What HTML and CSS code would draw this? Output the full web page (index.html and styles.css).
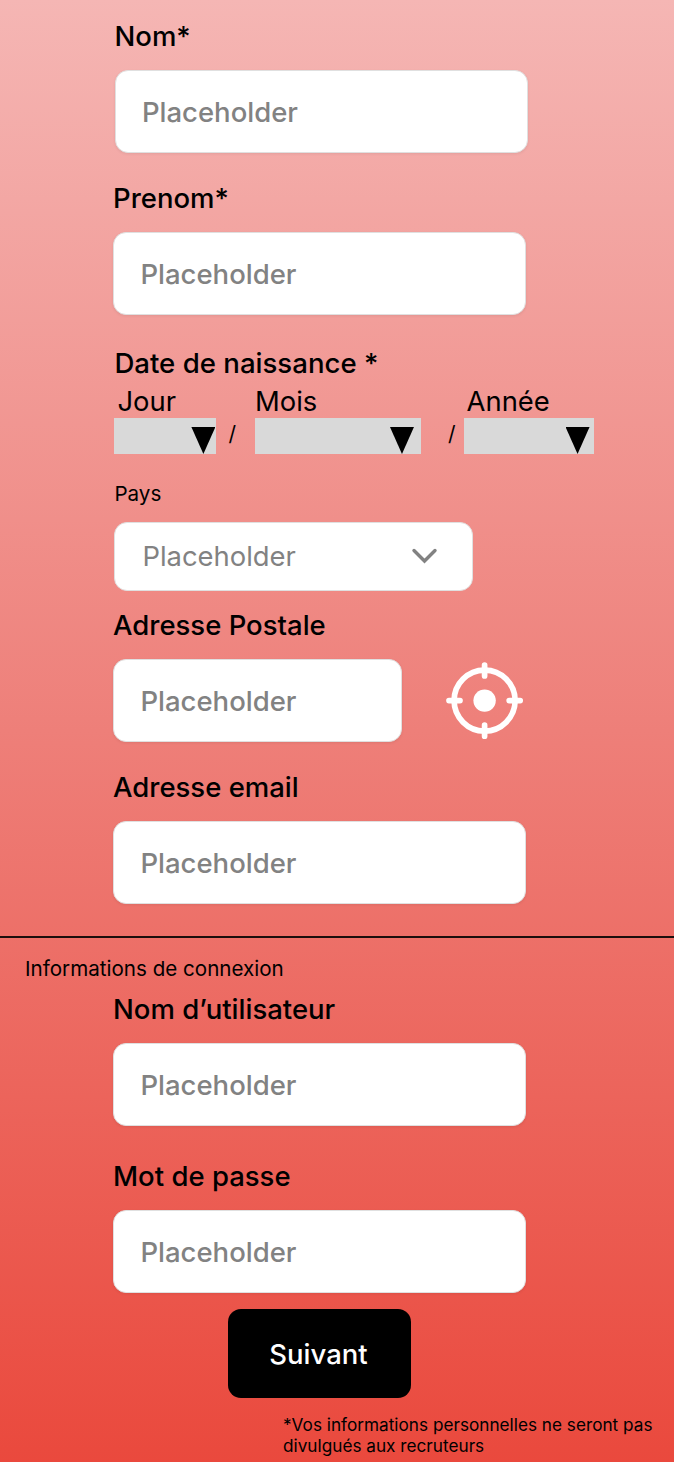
FILE: index.html
```html
<!DOCTYPE html>
<html lang="fr">
<head>
<meta charset="utf-8">
<title>Inscription</title>
<link rel="stylesheet" href="styles.css">
</head>
<body>
<form class="page">
  <section class="personal">
    <div class="field last-name"><label>Nom*</label><div class="input">Placeholder</div></div>
    <div class="field first-name"><label>Prenom*</label><div class="input">Placeholder</div></div>
    <div class="birth">
      <label>Date de naissance *</label>
      <div class="date-row">
        <div class="part day"><span>Jour</span><div class="select"><i></i></div></div>
        <span class="slash">/</span>
        <div class="part month"><span>Mois</span><div class="select"><i></i></div></div>
        <span class="slash">/</span>
        <div class="part year"><span>Année</span><div class="select"><i></i></div></div>
      </div>
    </div>
    <div class="country">
      <label class="small">Pays</label>
      <div class="dropdown"><span>Placeholder</span>
        <svg width="28" height="18" viewBox="0 0 28 18"><path d="M3 3.5 13.500 14 24 3.500" fill="none" stroke="#828282" stroke-width="3.400" stroke-linecap="round" stroke-linejoin="miter"/></svg>
      </div>
    </div>
    <div class="field address"><label>Adresse Postale</label>
      <div class="address-row"><div class="input">Placeholder</div>
        <svg class="locate" width="78" height="78" viewBox="0 0 78 78"><g fill="none" stroke="#fff" stroke-width="5.700"><circle cx="38.600" cy="38.600" r="30.500"/><path stroke-linecap="round" d="M38.600 3v11M38.600 63.200v11M3 38.600h11M63.200 38.600h11"/></g><circle cx="38.600" cy="38.600" r="11.200" fill="#fff"/></svg>
      </div>
    </div>
    <div class="field email"><label>Adresse email</label><div class="input">Placeholder</div></div>
  </section>
  <section class="account">
    <h2 class="small">Informations de connexion</h2>
    <div class="field user"><label>Nom d’utilisateur</label><div class="input">Placeholder</div></div>
    <div class="field password"><label>Mot de passe</label><div class="input">Placeholder</div></div>
    <button type="button" class="next">Suivant</button>
    <p class="note">*Vos informations personnelles ne seront pas<br>divulgués aux recruteurs</p>
  </section>
</form>
</body>
</html>
```
FILE: styles.css
```css
* { box-sizing: border-box; }
body { margin: 0; font-family: Inter, sans-serif; color: #000; }
.page { height: 1462px; overflow: hidden; background: linear-gradient(#f5b6b4, #ee7f79 50%, #ea493d); }
.personal { height: 936px; padding: 16px 0 0 113px; }
label { display: block; font-size: 27.5px; line-height: 41px; font-weight: 500; }
.field { width: 413px; height: 137px; display: flex; flex-direction: column; justify-content: space-between; }
.input { height: 83px; padding-left: 26.4px; line-height: 82px; font-size: 27.5px; font-weight: 500; color: #828282; background: #fff; border: 1.4px solid #e0e0e0; border-radius: 13px; box-shadow: 0 1px 3px rgba(0,0,0,.07); }
.last-name { margin-left: 1.5px; }
.first-name { margin-top: 25px; }
.birth { margin: 28px 0 0 1.4px; }
.birth > label { font-size: 27.6px; }
.date-row { display: flex; align-items: flex-end; height: 70px; }
.part span { display: block; font-size: 27.4px; line-height: 34px; padding-left: 3px; }
.month span { padding-left: 0; }
.select { height: 36px; background: #d9d9d9; display: flex; justify-content: flex-end; padding: 9px 2px 0 0; }
.select i { width: 24px; height: 27px; background: #000; clip-path: polygon(0 0, 100% 0, 50% 100%); }
.day { width: 102px; }
.day .select { padding-right: 1px; }
.month { width: 166px; margin-left: 19px; }
.month .select { padding-right: 7px; }
.year { width: 130px; margin-left: 8px; }
.year .select { padding-right: 4px; }
.slash { font-size: 21px; line-height: 40px; margin-left: 12px; }
.month + .slash { margin-left: 27px; }
.small { font-size: 20.6px; line-height: 30px; font-weight: 400; }
.country { margin: 25px 0 0 1.4px; }
.dropdown { margin-top: 12.5px; width: 359px; height: 69px; padding: 0 33px 0 27px; display: flex; align-items: center; justify-content: space-between; font-size: 27.4px; color: #828282; background: #fff; border: 1.4px solid #e0e0e0; border-radius: 13px; }
.address { margin-top: 14.5px; }
.address-row { display: flex; align-items: center; gap: 44px; }
.address .input { width: 289px; }
.locate { flex: none; }
.email { margin-top: 25px; }
.account { height: 526px; border-top: 2px solid #1c0e0d; padding-left: 113px; }
h2.small { margin: 16px 0 0 -88px; }
.user { margin-top: 5px; }
.password { margin-top: 30px; }
.next { display: block; margin: 16px 0 0 115px; width: 183px; height: 89px; padding: 0 2px 0 0; border: 0; border-radius: 13px; background: #000; color: #fff; font: 500 27.5px Inter, sans-serif; }
.note { margin: 16px 0 0 170px; font-size: 17.2px; line-height: 21px; }
```
